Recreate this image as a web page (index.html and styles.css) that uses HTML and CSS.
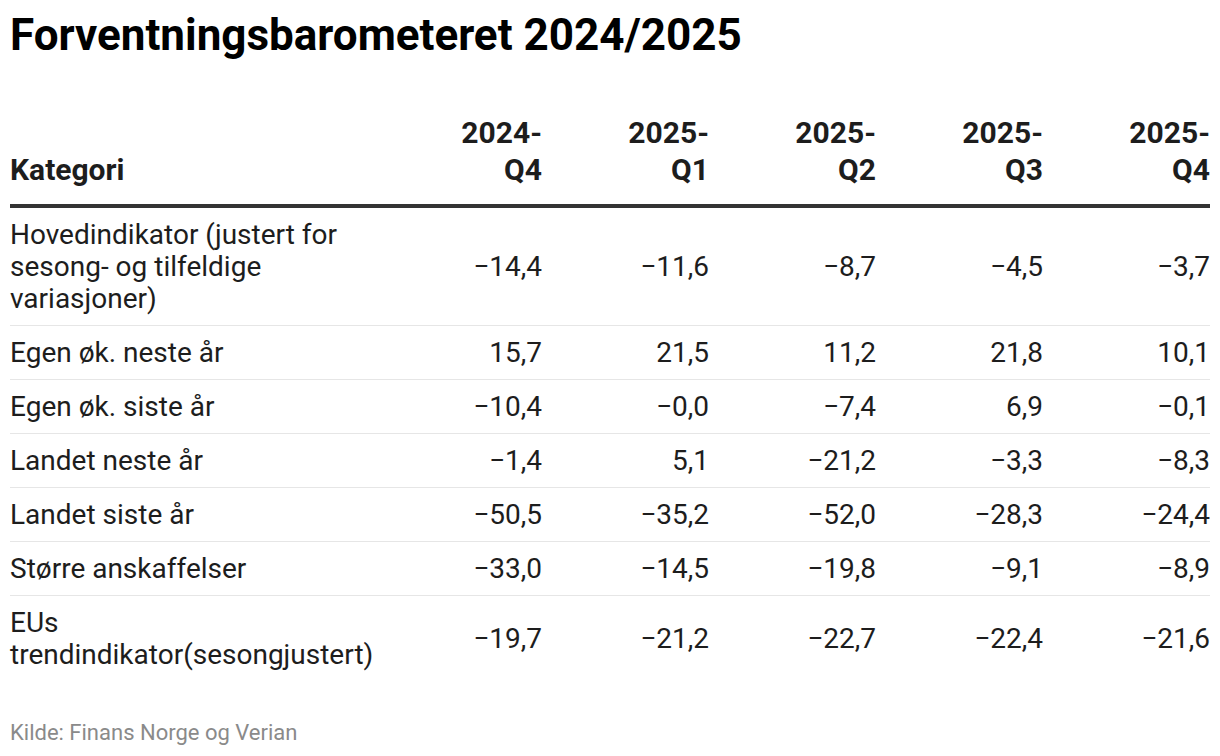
FILE: index.html
```html
<!DOCTYPE html>
<html lang="no">
<head>
<meta charset="utf-8">
<title>Forventningsbarometeret 2024/2025</title>
<link rel="stylesheet" href="styles.css">
</head>
<body>
<div class="chart">
  <h1 class="title">Forventningsbarometeret 2024/2025</h1>
  <table class="data">
    <thead>
      <tr>
        <th class="cat">Kategori</th>
        <th class="num">2024-<br>Q4</th>
        <th class="num">2025-<br>Q1</th>
        <th class="num">2025-<br>Q2</th>
        <th class="num">2025-<br>Q3</th>
        <th class="num">2025-<br>Q4</th>
      </tr>
    </thead>
    <tbody>
      <tr>
        <td class="cat">Hovedindikator (justert for sesong- og tilfeldige variasjoner)</td>
        <td class="num">−14,4</td><td class="num">−11,6</td><td class="num">−8,7</td><td class="num">−4,5</td><td class="num">−3,7</td>
      </tr>
      <tr>
        <td class="cat">Egen øk. neste år</td>
        <td class="num">15,7</td><td class="num">21,5</td><td class="num">11,2</td><td class="num">21,8</td><td class="num">10,1</td>
      </tr>
      <tr>
        <td class="cat">Egen øk. siste år</td>
        <td class="num">−10,4</td><td class="num">−0,0</td><td class="num">−7,4</td><td class="num">6,9</td><td class="num">−0,1</td>
      </tr>
      <tr>
        <td class="cat">Landet neste år</td>
        <td class="num">−1,4</td><td class="num">5,1</td><td class="num">−21,2</td><td class="num">−3,3</td><td class="num">−8,3</td>
      </tr>
      <tr>
        <td class="cat">Landet siste år</td>
        <td class="num">−50,5</td><td class="num">−35,2</td><td class="num">−52,0</td><td class="num">−28,3</td><td class="num">−24,4</td>
      </tr>
      <tr>
        <td class="cat">Større anskaffelser</td>
        <td class="num">−33,0</td><td class="num">−14,5</td><td class="num">−19,8</td><td class="num">−9,1</td><td class="num">−8,9</td>
      </tr>
      <tr class="last">
        <td class="cat">EUs trendindikator(sesongjustert)</td>
        <td class="num">−19,7</td><td class="num">−21,2</td><td class="num">−22,7</td><td class="num">−22,4</td><td class="num">−21,6</td>
      </tr>
    </tbody>
  </table>
  <p class="source">Kilde: Finans Norge og Verian</p>
</div>
</body>
</html>
```

FILE: styles.css
```css
html, body {
  margin: 0;
  padding: 0;
  background: #ffffff;
}

body {
  font-family: Roboto, "Liberation Sans", Arial, sans-serif;
  color: #1d1d1d;
}

.chart {
  padding: 11px 10px 0 10px;
}

.title {
  margin: 0;
  font-size: 44px;
  font-weight: 700;
  line-height: 48px;
  color: #000;
}

.data {
  width: 1200px;
  margin-top: 55px;
  border-collapse: collapse;
  table-layout: fixed;
  font-size: 28px;
  line-height: 32px;
}

.data th {
  font-size: 30px;
  font-weight: 700;
  color: #1d1d1d;
  vertical-align: bottom;
  padding: 0 0 16px 0;
  line-height: 37px;
  border-bottom: 4px solid #333333;
}

.data th.cat,
.data td.cat {
  text-align: left;
  width: 365px;
}

.data th.num,
.data td.num {
  text-align: right;
  width: 167px;
}

.data td {
  padding: 11px 0 10px 0;
  vertical-align: middle;
  border-bottom: 1px solid #e6e6e6;
}

.data tr.last td {
  border-bottom: none;
}

.source {
  margin: 40px 0 0 0;
  font-size: 22px;
  line-height: 24px;
  color: #8a8a8a;
}
```
